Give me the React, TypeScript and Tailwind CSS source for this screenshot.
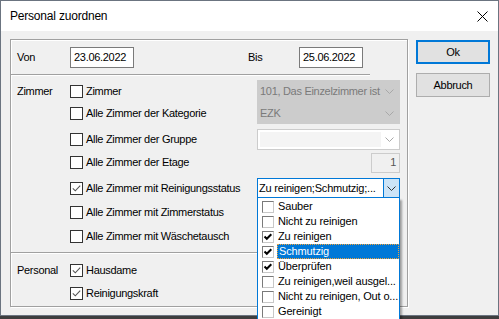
import React from "react";

function Box({ checked }: { checked?: boolean }) {
  return (
    <span className="w-[13px] h-[13px] border border-[#333333] bg-white flex items-center justify-center shrink-0">
      {checked && (
        <svg width="11" height="11" viewBox="0 0 11 11">
          <path d="M1.8 5.3 L4.3 7.8 L9.2 2.6" fill="none" stroke="#555" strokeWidth="1.1" />
        </svg>
      )}
    </span>
  );
}

function ListBox({ checked }: { checked?: boolean }) {
  return (
    <span className="w-[12px] h-[12px] border border-t-[#7a7a7a] border-l-[#7a7a7a] border-r-[#c8c8c8] border-b-[#c8c8c8] bg-white flex items-center justify-center shrink-0">
      {checked && (
        <svg width="10" height="10" viewBox="0 0 10 10">
          <path d="M1.5 4.5 L3.8 6.8 L8.3 2.2" fill="none" stroke="#000" strokeWidth="2" />
        </svg>
      )}
    </span>
  );
}

function Chevron({ color }: { color: string }) {
  return (
    <svg width="9" height="5" viewBox="0 0 9 5" className="shrink-0">
      <path d="M0.5 0.5 L4.5 4.5 L8.5 0.5" fill="none" stroke={color} strokeWidth="1" />
    </svg>
  );
}

function Row({
  label,
  text,
  checked,
  cls,
  children,
}: {
  label?: string;
  text: string;
  checked?: boolean;
  cls: string;
  children?: React.ReactNode;
}) {
  return (
    <div className={"flex items-center " + cls}>
      <div className="w-[59px] pl-[6px] shrink-0">{label}</div>
      <div className="w-[187px] flex items-center gap-[3px] shrink-0">
        <Box checked={checked} />
        <span className="whitespace-nowrap">{text}</span>
      </div>
      {children && <div className="w-[143px] flex justify-end shrink-0">{children}</div>}
    </div>
  );
}

const items: { t: string; c?: boolean; s?: boolean }[] = [
  { t: "Sauber" },
  { t: "Nicht zu reinigen" },
  { t: "Zu reinigen", c: true },
  { t: "Schmutzig", c: true, s: true },
  { t: "Überprüfen", c: true },
  { t: "Zu reinigen,weil ausgel..." },
  { t: "Nicht zu reinigen, Out o..." },
  { t: "Gereinigt" },
];

export default function App() {
  return (
    <div className="relative w-[499px] h-[319px] overflow-hidden bg-[#3e3e3e] font-['Liberation_Sans',Arial,sans-serif] text-[11px] text-black tracking-[-0.3px] leading-none">
      <div className="w-[499px] h-[316px] border border-[#6b7480] flex flex-col">
        <div className="h-[30px] bg-white flex items-center justify-between pl-[9px] pr-[10px] shrink-0">
          <span className="text-[12px] tracking-[-0.2px]">Personal zuordnen</span>
          <svg width="11" height="11" viewBox="0 0 11 11">
            <path d="M0.5 0.5 L10.5 10.5 M10.5 0.5 L0.5 10.5" stroke="#000" strokeWidth="1" />
          </svg>
        </div>
        <div className="flex-1 bg-[#f0f0f0] flex items-start pt-[8px] pl-[9px]">
          <div className="w-[398px] h-[268px] border border-[#a0a0a0] shadow-[inset_1px_1px_0_#ffffff,1px_1px_0_#ffffff] flex flex-col shrink-0">
            <div className="h-[34px] flex items-center shrink-0">
              <div className="w-[59px] pl-[6px]">Von</div>
              <div className="w-[64px] h-[21px] border border-[#7a7a7a] bg-white pl-[3px] flex items-center">23.06.2022</div>
              <div className="ml-[114px] w-[51px]">Bis</div>
              <div className="w-[64px] h-[21px] border border-[#7a7a7a] bg-white pl-[3px] flex items-center">25.06.2022</div>
            </div>
            <div className="w-[359px] h-[2px] border-t border-t-[#a0a0a0] border-b border-b-white shrink-0" />
            <div className="flex flex-col pt-[4px]">
              <Row label="Zimmer" text="Zimmer" cls="h-[22px]">
                <div className="w-[143px] h-[22px] bg-[#cccccc] border border-[#cccccc] text-[#7a7a7a] flex items-center justify-between pl-[2px] pr-[5px]">
                  <span className="whitespace-nowrap">101, Das Einzelzimmer ist</span>
                  <Chevron color="#a8a8a8" />
                </div>
              </Row>
              <Row text="Alle Zimmer der Kategorie" cls="h-[22px]">
                <div className="w-[143px] h-[22px] bg-[#cccccc] border border-[#cccccc] text-[#7a7a7a] flex items-center justify-between pl-[2px] pr-[5px]">
                  <span>EZK</span>
                  <Chevron color="#a8a8a8" />
                </div>
              </Row>
              <Row text="Alle Zimmer der Gruppe" cls="h-[21px] mt-[5px]">
                <div className="w-[143px] h-[21px] bg-white border border-[#cccccc] flex items-center justify-between pl-[2px] pr-[5px]">
                  <div className="w-[121px] h-[15px] bg-[#f4f4f4]" />
                  <Chevron color="#a8a8a8" />
                </div>
              </Row>
              <Row text="Alle Zimmer der Etage" cls="h-[21px] mt-[2px]">
                <div className="w-[29px] h-[20px] bg-[#f0f0f0] border border-[#cccccc] text-[#555555] flex items-center justify-end pr-[3px]">1</div>
              </Row>
              <Row text="Alle Zimmer mit Reinigungsstatus" checked cls="h-[20px] mt-[5px]">
                <div className="w-[143px] h-[20px] bg-white border border-[#0078d7] flex">
                  <div className="flex-1 flex items-center pl-[1px] whitespace-nowrap tracking-[-0.2px]">Zu reinigen;Schmutzig;...</div>
                  <div className="w-[16px] h-full bg-[#cce4f7] border-l border-l-[#0078d7] flex items-center justify-center">
                    <Chevron color="#333333" />
                  </div>
                </div>
              </Row>
              <Row text="Alle Zimmer mit Zimmerstatus" cls="h-[21px] mt-[4px]" />
              <Row text="Alle Zimmer mit Wäschetausch" cls="h-[21px] mt-[3px]" />
              <div className="w-[359px] h-[2px] mt-[5px] border-t border-t-[#a0a0a0] border-b border-b-white shrink-0" />
              <Row label="Personal" text="Hausdame" checked cls="h-[21px] mt-[6px]" />
              <Row text="Reinigungskraft" checked cls="h-[21px] mt-[2px]" />
            </div>
          </div>
          <div className="ml-[8px] flex flex-col pt-[1px]">
            <div className="w-[74px] h-[24px] border-2 border-[#0078d7] bg-[#e1e1e1] flex items-center justify-center">Ok</div>
            <div className="mt-[9px] w-[74px] h-[24px] border border-[#adadad] bg-[#e1e1e1] flex items-center justify-center">Abbruch</div>
          </div>
        </div>
      </div>
      <div className="absolute left-[257px] top-[198px] w-[143px] h-[140px] bg-white border border-t-0 border-[#0078d7] shadow-[2px_2px_2px_rgba(0,0,0,0.35)] pt-[1px] tracking-[-0.15px]">
        {items.map((it) => (
          <div key={it.t} className="h-[15px] flex items-center pl-[4px]">
            <ListBox checked={it.c} />
            <div
              className={
                "ml-[3px] flex-1 h-[15px] flex items-center pl-[1px] whitespace-nowrap " +
                (it.s ? "bg-[#0078d7] text-white border border-dotted border-[#f2a33a]" : "")
              }
            >
              {it.t}
            </div>
          </div>
        ))}
      </div>
    </div>
  );
}
